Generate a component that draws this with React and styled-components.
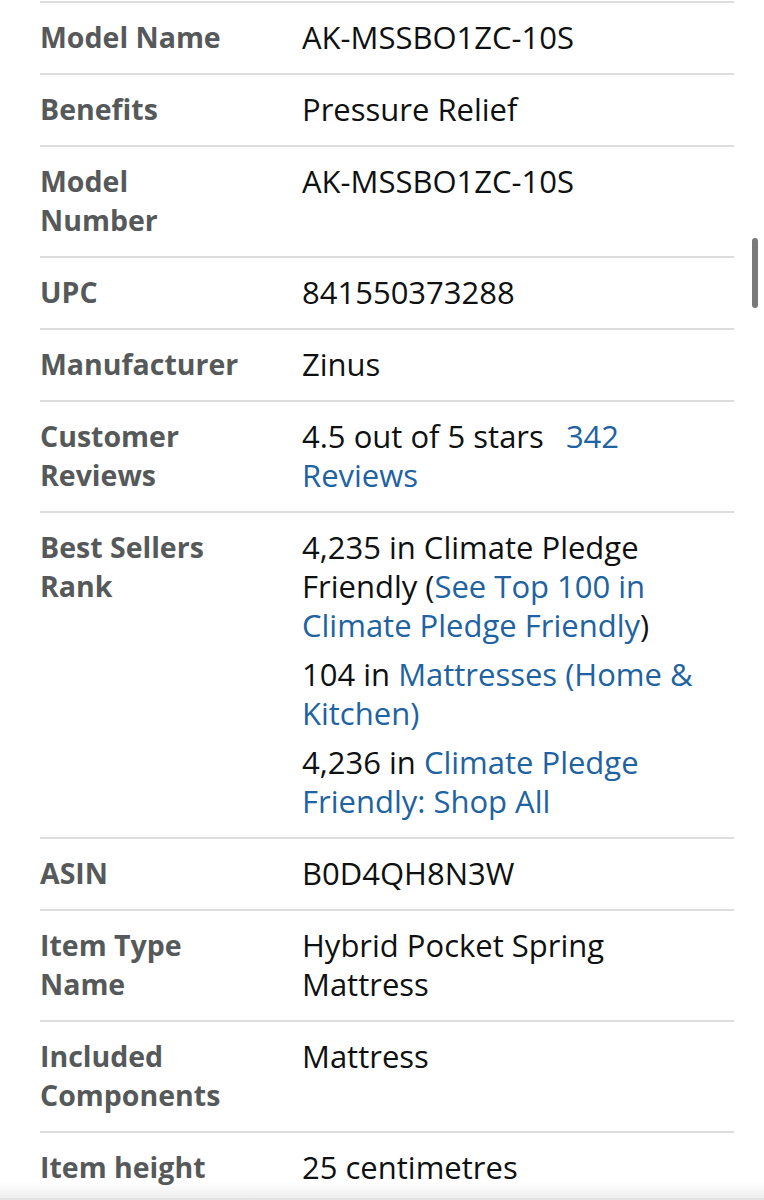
import React from "react";
import styled, { createGlobalStyle } from "styled-components";

const GlobalStyle = createGlobalStyle`
  html, body {
    margin: 0;
    padding: 0;
    background: #fff;
  }
  body {
    font-family: "Open Sans", "Noto Sans", sans-serif;
    -webkit-font-smoothing: antialiased;
  }
`;

const Page = styled.div`
  position: relative;
  width: 764px;
  height: 1200px;
  overflow: hidden;
  background: #fff;
  padding: 0 30px 0 40px;
  box-sizing: border-box;
`;

const Details = styled.div`
  display: flex;
  flex-direction: column;
  margin-top: 1px;
`;

const Row = styled.div`
  display: grid;
  grid-template-columns: 262px 1fr;
  border-top: 2px solid #dcdddd;
  padding: 15px 0 16px;
`;

const Label = styled.div`
  padding-right: 54px;
  font-size: 28.5px;
  line-height: 39px;
  font-weight: 700;
  color: #565959;
`;

const Value = styled.div`
  display: flex;
  flex-direction: column;
  gap: 10px;
  padding-right: 12px;
  font-size: 31px;
  line-height: 39px;
  color: #0f1111;
`;

const Line = styled.div``;

const Link = styled.a`
  color: #2162a1;
  text-decoration: none;
`;

const ReviewLink = styled(Link)`
  margin-left: 14px;
`;

const ScrollThumb = styled.div`
  position: absolute;
  top: 238px;
  right: 6px;
  width: 6px;
  height: 70px;
  border-radius: 3px;
  background: #7a7a7a;
`;

const BottomShade = styled.div`
  position: absolute;
  left: 0;
  right: 0;
  bottom: 0;
  height: 16px;
  background: linear-gradient(to bottom, rgba(0, 0, 0, 0), rgba(0, 0, 0, 0.07));
  border-bottom: 2px solid #e2e4e4;
`;

const rows = [
  { label: "Model Name", value: ["AK-MSSBO1ZC-10S"] },
  { label: "Benefits", value: ["Pressure Relief"] },
  { label: "Model Number", value: ["AK-MSSBO1ZC-10S"] },
  { label: "UPC", value: ["841550373288"] },
  { label: "Manufacturer", value: ["Zinus"] },
  {
    label: "Customer Reviews",
    value: [
      <>
        4.5 out of 5 stars <ReviewLink href="#">342 Reviews</ReviewLink>
      </>,
    ],
  },
  {
    label: "Best Sellers Rank",
    value: [
      <>
        4,235 in Climate Pledge Friendly (
        <Link href="#">See Top 100 in Climate Pledge Friendly</Link>)
      </>,
      <>
        104 in <Link href="#">Mattresses (Home &amp; Kitchen)</Link>
      </>,
      <>
        4,236 in <Link href="#">Climate Pledge Friendly: Shop All</Link>
      </>,
    ],
  },
  { label: "ASIN", value: ["B0D4QH8N3W"] },
  { label: "Item Type Name", value: ["Hybrid Pocket Spring Mattress"] },
  { label: "Included Components", value: ["Mattress"] },
  { label: "Item height", value: ["25 centimetres"] },
];

const App = () => {
  return (
    <Page>
      <GlobalStyle />
      <Details>
        {rows.map((row) => (
          <Row key={row.label}>
            <Label>{row.label}</Label>
            <Value>
              {row.value.map((line, i) => (
                <Line key={i}>{line}</Line>
              ))}
            </Value>
          </Row>
        ))}
      </Details>
      <ScrollThumb />
      <BottomShade />
    </Page>
  );
};

export default App;
